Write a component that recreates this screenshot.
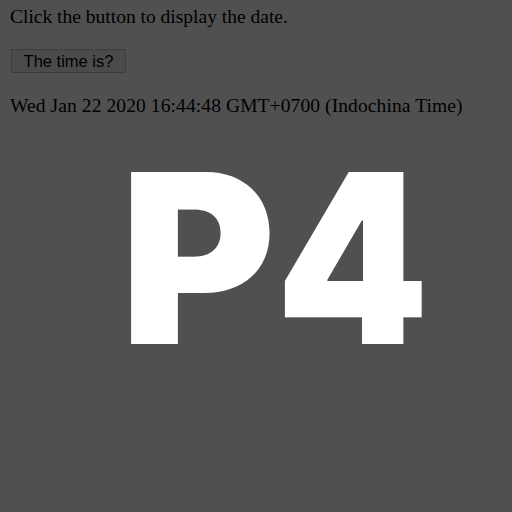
import React, { useState } from 'react';

export default function App() {
  const [now, setNow] = useState('Wed Jan 22 2020 16:44:48 GMT+0700 (Indochina Time)');

  return (
    <div className="w-[512px] h-[512px] bg-[#505050] overflow-hidden pl-[10px] pt-[6px] text-black font-['Liberation_Serif',serif]">
      <p className="text-[19.5px] leading-[22px] h-[22px] whitespace-nowrap">Click the button to display the date.</p>
      <button
        type="button"
        onClick={() => setNow(new Date().toString())}
        className="mt-[21px] ml-px block h-[24px] w-[115px] border border-[#3c3c3c] bg-[#4b4b4b] font-['Liberation_Sans',Arial,sans-serif] text-[16.5px] leading-none text-black"
      >
        The time is?
      </button>
      <p className="mt-[22px] text-[19.5px] leading-[22px] h-[22px] whitespace-nowrap tracking-[0.1px]">{now}</p>
      <div className="mt-[22px] pl-[110px] font-['Inter',sans-serif] font-black text-white text-[237px] leading-none whitespace-nowrap">
        <span>P</span>
        <span className="inline-block origin-left scale-x-[0.92]">4</span>
      </div>
    </div>
  );
}
